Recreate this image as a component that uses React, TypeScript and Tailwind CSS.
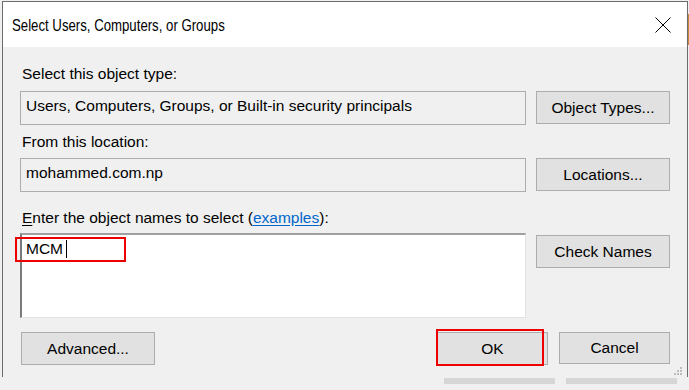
import React from "react";

const ui = { fontFamily: '"Liberation Sans", Arial, sans-serif' };

function WinButton({ children, className = "" }: { children: React.ReactNode; className?: string }) {
  return (
    <button
      className={`flex items-center justify-center bg-[#e1e1e1] border border-[#adadad] text-[15.5px] text-black ${className}`}
      style={ui}
    >
      {children}
    </button>
  );
}

export default function App() {
  return (
    <div className="w-[689px] h-[390px] bg-[#f0f0f0] overflow-hidden flex flex-col" style={ui}>
      <div className="flex items-start">
        {/* dialog window */}
        <div className="relative ml-[2px] mt-[1px] w-[686px] h-[376px] border-l border-t border-r border-[#6b6b6b] bg-[#f0f0f0] flex flex-col">
          {/* title bar */}
          <div className="h-[45px] bg-white flex items-center justify-between pl-[9px] pr-[16px] shrink-0">
            <span className="text-[16.5px] scale-x-[0.8] origin-left text-black pt-[1px] whitespace-nowrap">
              Select Users, Computers, or Groups
            </span>
            <svg width="16" height="16" viewBox="0 0 16 16" className="mt-[1px]">
              <path d="M0.5 0.5 L15.5 15.5 M15.5 0.5 L0.5 15.5" stroke="#000" strokeWidth="1" fill="none" />
            </svg>
          </div>

          {/* body */}
          <div className="flex flex-col pl-[17px] pr-[17px] text-[15.5px] text-black">
            <div className="mt-[18px] h-[18px] leading-[18px] pl-[2px]">Select this object type:</div>
            <div className="mt-[8px] flex gap-[10px] items-start">
              <div className="flex-1 h-[34px] border border-[#adadad] bg-[#f0f0f0] flex items-center pl-[5px] pb-[5px]">
                Users, Computers, Groups, or Built-in security principals
              </div>
              <WinButton className="w-[134px] h-[33px]">Object Types...</WinButton>
            </div>

            <div className="mt-[8px] h-[18px] leading-[18px] pl-[2px]">From this location:</div>
            <div className="mt-[7px] flex gap-[10px] items-start">
              <div className="flex-1 h-[34px] border border-[#adadad] bg-[#f0f0f0] flex items-center pl-[5px] pb-[5px]">
                mohammed.com.np
              </div>
              <WinButton className="w-[134px] h-[33px]">Locations...</WinButton>
            </div>

            <div className="mt-[17px] h-[18px] leading-[18px] pl-[2px]">
              <span className="underline underline-offset-2">E</span>nter the object names to select (
              <span className="text-[#0066cc] underline underline-offset-2">examples</span>):
            </div>
            <div className="mt-[6px] flex gap-[10px] items-start">
              <div className="relative flex-1 h-[85px] bg-white border-l-2 border-t-2 border-r border-b border-l-[#7a7a7a] border-t-[#a0a0a0] border-r-[#e3e3e3] border-b-[#e3e3e3] pl-[4px] pt-[4px]">
                <div className="flex items-center h-[19px] leading-[19px]">
                  <span>MCM</span>
                  <span className="ml-[3px] w-[1px] h-[18px] bg-black" />
                </div>
                <div className="absolute left-[-7px] top-[2px] w-[111px] h-[25px] border-2 border-[#ee0000]" />
              </div>
              <WinButton className="w-[134px] h-[33px] mt-[2px]">Check Names</WinButton>
            </div>

            <div className="mt-[14px] flex items-start">
              <WinButton className="ml-[1px] w-[134px] h-[33px]">Advanced...</WinButton>
              <div className="flex-1" />
              <div className="relative">
                <WinButton className="w-[111px] h-[33px]">OK</WinButton>
                <div className="absolute left-[-1px] top-[-3px] w-[108px] h-[37px] border-2 border-[#ee0000]" />
              </div>
              <WinButton className="ml-[11px] w-[111px] h-[32px]">Cancel</WinButton>
            </div>
          </div>

          {/* resize grip */}
          <svg width="10" height="10" viewBox="0 0 10 10" className="absolute right-[4px] bottom-[1px]">
            <rect x="7" y="1" width="2" height="2" fill="#bdbdbd" />
            <rect x="4" y="4" width="2" height="2" fill="#bdbdbd" />
            <rect x="7" y="4" width="2" height="2" fill="#bdbdbd" />
            <rect x="1" y="7" width="2" height="2" fill="#bdbdbd" />
            <rect x="4" y="7" width="2" height="2" fill="#bdbdbd" />
            <rect x="7" y="7" width="2" height="2" fill="#bdbdbd" />
          </svg>
        </div>
        <div className="mt-[14px] w-[1px] h-[31px] bg-[#c98a3a]" />
      </div>

      {/* window behind */}
      <div className="flex mt-[1px]">
        <div className="ml-[444px] w-[111px] h-[6px] bg-[#d6d6d6]" />
        <div className="ml-[11px] w-[111px] h-[6px] bg-[#d6d6d6]" />
      </div>
    </div>
  );
}
